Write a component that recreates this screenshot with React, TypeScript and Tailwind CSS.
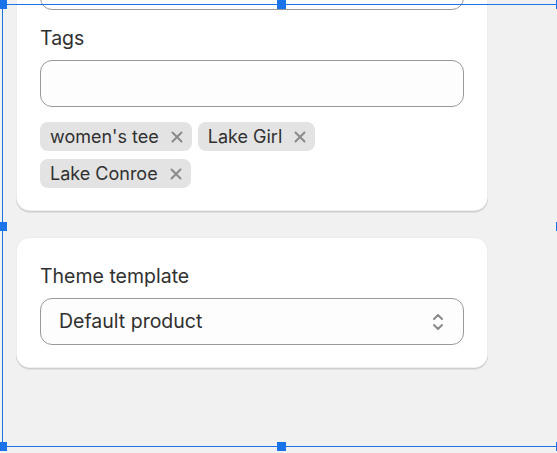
import React from "react";

const XIcon = () => (
  <svg width="12" height="12" viewBox="0 0 12 12" className="shrink-0">
    <path d="M1.5 1.5 L10.5 10.5 M10.5 1.5 L1.5 10.5" stroke="#8a8a8a" strokeWidth="2" strokeLinecap="round" />
  </svg>
);

const Chip = ({ label }: { label: string }) => (
  <div className="flex h-[29px] items-center gap-[12px] rounded-[8px] bg-[#e3e3e3] pl-[10px] pr-[9px]">
    <span className="text-[18px] leading-[28px] text-[#303030]">{label}</span>
    <XIcon />
  </div>
);

const SelectIcon = () => (
  <svg width="12" height="18" viewBox="0 0 12 18">
    <path d="M2 6 L6 2 L10 6" fill="none" stroke="#8a8a8a" strokeWidth="2" strokeLinecap="round" strokeLinejoin="round" />
    <path d="M2 12 L6 16 L10 12" fill="none" stroke="#8a8a8a" strokeWidth="2" strokeLinecap="round" strokeLinejoin="round" />
  </svg>
);

const cardCls =
  "w-[472px] rounded-[14px] bg-white shadow-[0_1px_0_rgba(0,0,0,0.07),inset_0_-1.5px_0_rgba(0,0,0,0.13),inset_0_0_0_1px_rgba(0,0,0,0.07)]";

const Handle = ({ cls }: { cls: string }) => (
  <div className={"absolute h-[9px] w-[9px] bg-[#1a73e8] " + cls} />
);

export default function App() {
  return (
    <div
      className="relative h-[453px] w-[557px] overflow-hidden bg-[#f1f1f1]"
      style={{ fontFamily: "Inter, 'Noto Sans', sans-serif" }}
    >
      <div className="flex flex-col pl-[16px]">
        <div className={cardCls + " -mt-[60px] px-[24px] pt-[23px] pb-[24px]"}>
          <div className="h-[47px] rounded-[12px] border-[1.5px] border-[#999] bg-[#fdfdfd]" />
          <div className="mt-[14px] text-[19.5px] leading-[29px] text-[#303030]">Tags</div>
          <div className="mt-[7px] h-[47px] rounded-[12px] border-[1.5px] border-[#999] bg-[#fdfdfd]" />
          <div className="mt-[15px] flex flex-wrap gap-x-[6px] gap-y-[8px]">
            <Chip label="women's tee" />
            <Chip label="Lake Girl" />
            <Chip label="Lake Conroe" />
          </div>
        </div>
        <div className={cardCls + " mt-[25px] px-[24px] pt-[25px] pb-[24px]"}>
          <div className="text-[19.5px] leading-[29px] text-[#303030]">Theme template</div>
          <div className="mt-[7px] flex h-[47px] items-center justify-between rounded-[12px] border-[1.5px] border-[#999] bg-[#fdfdfd] pl-[18px] pr-[19px]">
            <span className="text-[19.5px] leading-[29px] text-[#303030]">Default product</span>
            <SelectIcon />
          </div>
        </div>
      </div>

      <div className="pointer-events-none absolute left-[2px] top-[4px] h-[443px] w-[559px] border border-[#1a73e8]" />
      <Handle cls="left-[-2px] top-0" />
      <Handle cls="left-[277px] top-0" />
      <Handle cls="left-[556px] top-0" />
      <Handle cls="left-[-2px] top-[222px]" />
      <Handle cls="left-[556px] top-[222px]" />
      <Handle cls="left-[-2px] top-[442px]" />
      <Handle cls="left-[277px] top-[442px]" />
      <Handle cls="left-[556px] top-[442px]" />
    </div>
  );
}
